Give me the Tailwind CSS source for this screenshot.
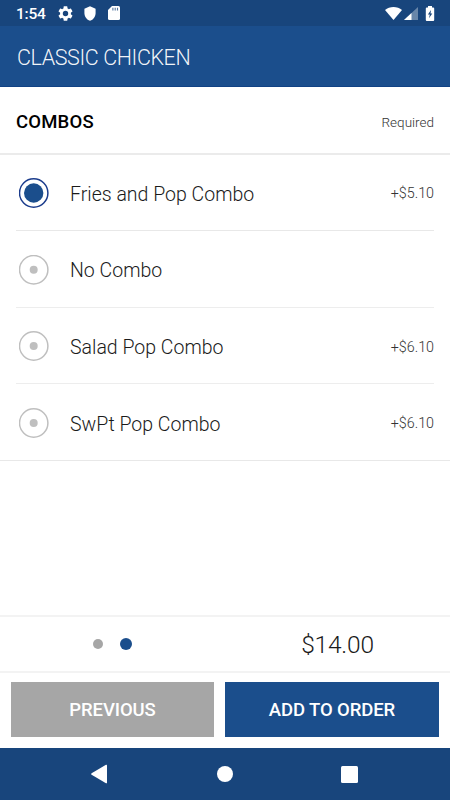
<!DOCTYPE html>
<html lang="en">
<head>
<meta charset="utf-8">
<title>Classic Chicken</title>
<script src="https://cdn.jsdelivr.net/npm/@tailwindcss/browser@4"></script>
</head>
<body class="bg-white">
<div class="w-[450px] h-[800px] flex flex-col overflow-hidden bg-white font-['Roboto',sans-serif] text-[#1a1a1a]">
  <div class="h-[26px] shrink-0 bg-[#18457c] flex items-center text-white">
    <span class="ml-[16px] w-[42px] text-[15.5px] leading-[26px] font-medium pt-[2px] tracking-[-0.2px]">1:54</span>
    <svg class="w-[15px] h-[15px]" viewBox="2 2 20 20" fill="#fff"><path d="M19.14 12.94c.04-.3.06-.61.06-.94 0-.32-.02-.64-.07-.94l2.03-1.58a.49.49 0 0 0 .12-.61l-1.92-3.32a.49.49 0 0 0-.59-.22l-2.39.96c-.5-.38-1.03-.7-1.62-.94l-.36-2.54a.48.48 0 0 0-.48-.41h-3.84c-.24 0-.43.17-.47.41l-.36 2.54c-.59.24-1.13.57-1.62.94l-2.39-.96a.48.48 0 0 0-.59.22L2.74 8.87c-.12.21-.08.47.12.61l2.03 1.58c-.05.3-.09.63-.09.94s.02.64.07.94l-2.03 1.58a.49.49 0 0 0-.12.61l1.92 3.32c.12.22.37.29.59.22l2.39-.96c.5.38 1.03.7 1.62.94l.36 2.54c.05.24.24.41.48.41h3.84c.24 0 .44-.17.47-.41l.36-2.54c.59-.24 1.13-.56 1.62-.94l2.39.96c.22.08.47 0 .59-.22l1.92-3.32a.49.49 0 0 0-.12-.61zM12 15.6a3.6 3.6 0 1 1 0-7.2 3.6 3.6 0 0 1 0 7.2z"/></svg>
    <svg class="w-[12px] h-[15px] ml-[11px]" viewBox="0 0 12 15" fill="#fff"><path d="M6 .2 11.6 2.7V7c0 3.700-2.200 6.700-5.600 7.800C2.600 13.700.4 10.700.4 7V2.700z"/></svg>
    <svg class="w-[12px] h-[14px] ml-[12px]" viewBox="0 0 12 14"><path fill="#fff" d="M4 0h6.500Q12 0 12 1.500v11Q12 14 10.500 14h-9Q0 14 0 12.500V4z"/><path stroke="#18457c" stroke-opacity=".75" stroke-width="1.100" d="M4.900 1.800v2.700M7.200 1.800v2.700M9.500 1.800v2.700"/></svg>
    <svg class="w-[17px] h-[13px] ml-auto" viewBox="0 0 17 13" fill="#fff"><path d="M0 3C4.500-.9 12.500-.9 17 3L8.500 13z"/></svg>
    <svg class="w-[14px] h-[13px] ml-[2px] mt-[1px]" viewBox="0 0 14 13" fill="#fff"><path d="M14 0v13H0z" fill-opacity=".35"/><path d="M7.500 6v7H0z"/></svg>
    <svg class="w-[10px] h-[15px] ml-[7px] mr-[15px]" viewBox="0 0 10 15"><path fill="#fff" d="M3 0h4v1.500h1.200q1 0 1 1V14q0 1-1 1H1.800q-1 0-1-1V2.500q0-1 1-1H3z"/><path fill="#18457c" d="M6 4 2.900 8.500h1.900L4 12.300l3.300-4.700H5.500z"/></svg>
  </div>
  <div class="h-[61px] shrink-0 bg-[#1b4e8c] border-b border-[#114284] flex items-center px-[17px] pt-[5px]">
    <h1 class="text-[21.500px] font-light tracking-[-0.4px] text-white/95 whitespace-nowrap">CLASSIC CHICKEN</h1>
  </div>
  <div class="h-[68px] shrink-0 border-b-2 border-[#ebebeb] flex items-center justify-between px-[16px] pt-[4px]">
    <h2 class="text-[18.500px] font-medium tracking-[0.2px] pt-[1px] text-black">COMBOS</h2>
    <span class="text-[13.500px] font-light text-[#333]">Required</span>
  </div>
  <div class="h-[306px] shrink-0 border-b border-[#e8e8e8] px-[16px] grid grid-rows-4">
    <div class="flex items-center border-b border-[#e8e8e8]">
      <svg class="w-[30px] h-[30px] ml-[3px]" viewBox="0 0 30 30"><circle cx="14.700" cy="15" r="14.200" fill="none" stroke="#1b3c8c" stroke-width="1.500"/><circle cx="14.700" cy="15" r="9.700" fill="#1b4e8c"/></svg>
      <span class="ml-[21px] mt-[3px] text-[19.500px] font-light">Fries and Pop Combo</span><span class="ml-auto mt-[2px] text-[14.300px] font-light text-[#333]">+$5.10</span>
    </div>
    <div class="flex items-center border-b border-[#ededed] pt-[2px]">
      <svg class="w-[30px] h-[30px] ml-[3px]" viewBox="0 0 30 30"><circle cx="14.700" cy="14.700" r="14.200" fill="none" stroke="#bfbfbf" stroke-width="1.500"/><circle cx="14.700" cy="14.700" r="4" fill="#bfbfbf"/></svg>
      <span class="ml-[21px] mt-[2px] text-[19.500px] font-light">No Combo</span>
    </div>
    <div class="flex items-center border-b border-[#ededed] pt-[2px]">
      <svg class="w-[30px] h-[30px] ml-[3px]" viewBox="0 0 30 30"><circle cx="14.700" cy="15" r="14.200" fill="none" stroke="#bfbfbf" stroke-width="1.500"/><circle cx="14.700" cy="15" r="4" fill="#bfbfbf"/></svg>
      <span class="ml-[21px] mt-[2px] text-[19.500px] font-light">Salad Pop Combo</span><span class="ml-auto mt-[3px] text-[14.300px] font-light text-[#333]">+$6.10</span>
    </div>
    <div class="flex items-center pt-[2px]">
      <svg class="w-[30px] h-[30px] ml-[3px]" viewBox="0 0 30 30"><circle cx="14.700" cy="15" r="14.200" fill="none" stroke="#bfbfbf" stroke-width="1.500"/><circle cx="14.700" cy="15" r="4" fill="#bfbfbf"/></svg>
      <span class="ml-[21px] mt-[3px] text-[19.500px] font-light">SwPt Pop Combo</span><span class="ml-auto mt-[2px] text-[14.300px] font-light text-[#333]">+$6.10</span>
    </div>
  </div>
  <div class="flex-1"></div>
  <div class="h-[58px] shrink-0 border-y-2 border-[#f3f3f3] grid grid-cols-2 items-center">
    <div class="flex items-center justify-center gap-[17px]"><i class="size-[10px] rounded-full bg-[#a6a6a6]"></i><i class="size-[12px] rounded-full bg-[#1b4e8c]"></i></div>
    <div class="text-center text-[24.500px] font-light tracking-[-0.2px] pt-[2px]">$14.00</div>
  </div>
  <div class="h-[75px] shrink-0 pt-[9px] px-[11px] flex gap-[11px] text-[18.500px] font-medium tracking-[-0.1px] text-white">
    <button class="w-[203px] h-[55px] bg-[#a6a6a6] pt-[2px]">PREVIOUS</button>
    <button class="w-[214px] h-[55px] bg-[#1b4e8c] pt-[2px]">ADD TO ORDER</button>
  </div>
  <div class="h-[52px] shrink-0 bg-[#18457c] flex items-center">
    <svg class="w-[16px] h-[20px] ml-[91px]" viewBox="0 0 16 20" fill="#fff"><path d="M15 .8q1-.5 1 .7v17q0 1.200-1 .7L.6 10.800q-1-.8 0-1.600z"/></svg>
    <i class="size-[16px] rounded-full bg-white ml-[110px]"></i>
    <i class="size-[17px] rounded-[1.500px] bg-white ml-[108px]"></i>
  </div>
</div>
</body>
</html>
